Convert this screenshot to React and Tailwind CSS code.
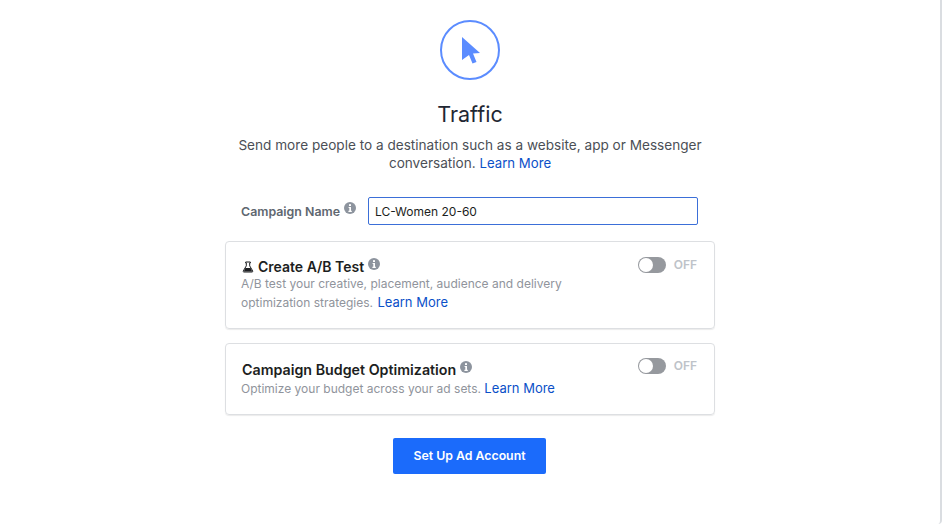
import React from 'react';

function InfoDot({ className }) {
  return (
    <svg viewBox="0 0 12 12" className={className}>
      <circle cx="6" cy="6" r="6" fill="#8d949e" />
      <rect x="5" y="2.2" width="2" height="1.8" fill="#fff" />
      <path d="M4.6 5h2.4v3.8h.8V10H4.4V8.8h.9V6.1h-.7z" fill="#fff" />
    </svg>
  );
}

function Flask() {
  return (
    <svg viewBox="0 0 12 12" className="w-[12px] h-[12px] mr-[4px]">
      <path d="M3.6 1h4.8v.9h-.7v3l3 5c.3.6 0 1.1-.6 1.1H1.9c-.6 0-.9-.5-.6-1.1l3-5v-3h-.7z" fill="none" stroke="#1c1e21" strokeWidth="1" />
      <path d="M3.4 7h5.2l1.7 3.4H1.7z" fill="#1c1e21" />
    </svg>
  );
}

function Toggle({ className }) {
  return (
    <div className={`flex items-center self-start gap-[8px] ${className}`}>
      <div className="w-[28px] h-[16px] rounded-full bg-[#96999e] p-[1px]">
        <div className="w-[14px] h-[14px] rounded-full bg-white" />
      </div>
      <span className="text-[12px] font-semibold text-[#bec3c9] leading-[16px]">OFF</span>
    </div>
  );
}

function LearnMore({ className }) {
  return <a className={`text-[#0b50c8] text-[13px] ${className}`}>Learn More</a>;
}

export default function App() {
  return (
    <div className="w-[942px] h-[524px] overflow-hidden bg-white border-r-2 border-[#dadde1] rounded-b-[4px] flex flex-col items-center pt-[20px] text-[#1c1e21] font-['Inter','Liberation_Sans',sans-serif]">
      <div className="w-[60px] h-[60px] rounded-full border-2 border-[#5b8cff] flex items-center justify-center">
        <svg viewBox="0 0 20 28" className="w-[20px] h-[28px] ml-[1px]">
          <path d="M1 1 L19 17 L12 17.5 L15.5 26 L11.5 27.5 L8 19 L1 24 Z" fill="#5b8cff" />
        </svg>
      </div>
      <h1 className="mt-[20px] text-[21.5px] leading-[28px] font-normal text-[#1f2733]">Traffic</h1>
      <p className="mt-[8px] w-[490px] text-center text-[13.6px] leading-[18px] text-[#4b4f56]">
        Send more people to a destination such as a website, app or Messenger conversation. <a className="text-[#0b50c8] text-[13.2px]">Learn More</a>
      </p>

      <div className="mt-[25px] w-[490px] pl-[16px] pr-[17px] flex items-center justify-between">
        <div className="flex items-start pt-[1px]">
          <span className="text-[12.4px] leading-[16px] font-semibold text-[#606770]">Campaign Name</span>
          <InfoDot className="w-[12px] h-[12px] ml-[4px] mt-[-2px]" />
        </div>
        <div className="w-[330px] h-[28px] border border-[#3b6fd8] rounded-[2px] flex items-center px-[6px] pt-[1px] text-[12px] text-[#1c1e21]">LC-Women 20-60</div>
      </div>

      <section className="mt-[16px] w-[490px] h-[88px] border border-[#dddfe2] rounded-[4px] shadow-[0_1px_1px_rgba(0,0,0,0.08)] pl-[15px] pr-[17px] pt-[16px] flex justify-between">
        <div>
          <div className="flex items-center h-[17px] ml-[1px]">
            <Flask />
            <h2 className="text-[14px] leading-[18px] font-semibold text-[#1c1e21]">Create A/B Test</h2>
            <InfoDot className="w-[12px] h-[12px] ml-[4px] mt-[-6px]" />
          </div>
          <p className="w-[360px] text-[12px] leading-[18px] text-[#90949c]">
            A/B test your creative, placement, audience and delivery optimization strategies. <LearnMore className="ml-[1px]" />
          </p>
        </div>
        <Toggle className="mt-[-1px]" />
      </section>

      <section className="mt-[14px] w-[490px] h-[72px] border border-[#dddfe2] rounded-[4px] shadow-[0_1px_1px_rgba(0,0,0,0.08)] pl-[15px] pr-[17px] pt-[16px] flex justify-between">
        <div>
          <div className="flex items-center h-[18px] mt-[1px] ml-[1px]">
            <h2 className="text-[14.25px] leading-[18px] font-semibold text-[#1c1e21]">Campaign Budget Optimization</h2>
            <InfoDot className="w-[12px] h-[12px] ml-[4px] mt-[-6px]" />
          </div>
          <p className="text-[12px] leading-[19px] text-[#90949c]">
            Optimize your budget across your ad sets. <LearnMore />
          </p>
        </div>
        <Toggle className="mt-[-2px]" />
      </section>

      <button className="mt-[23px] ml-[-1px] w-[153px] h-[36px] rounded-[2px] bg-[#1b6bfb] text-white text-[12.3px] font-semibold">Set Up Ad Account</button>
    </div>
  );
}
